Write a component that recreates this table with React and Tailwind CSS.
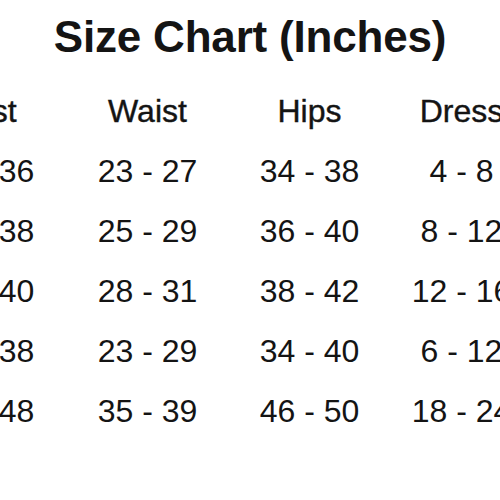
import React from "react";

const headers = ["Bust", "Waist", "Hips", "Dress"];

const rows = [
  ["32 - 36", "23 - 27", "34 - 38", "4 - 8"],
  ["34 - 38", "25 - 29", "36 - 40", "8 - 12"],
  ["36 - 40", "28 - 31", "38 - 42", "12 - 16"],
  ["32 - 38", "23 - 29", "34 - 40", "6 - 12"],
  ["44 - 48", "35 - 39", "46 - 50", "18 - 24"],
];

function App() {
  return (
    <div
      className="w-[500px] h-[500px] overflow-hidden bg-white text-[#141414]"
      style={{ fontFamily: '"Liberation Sans", Arial, sans-serif' }}
    >
      <h1 className="pt-[15px] text-center text-[44px] leading-none font-bold tracking-[-0.2px]">
        Size Chart (Inches)
      </h1>

      {/* table is wider than the window, first and last columns are cut */}
      <div className="mt-[22px] ml-[-97px] w-[630px] grid grid-cols-[163px_163px_161px_143px] text-[32px] leading-[60px] text-center">
        {headers.map((h) => (
          <div key={h} className="whitespace-nowrap [-webkit-text-stroke:0.4px_#141414]">
            {h}
          </div>
        ))}
        {rows.map((row, i) =>
          row.map((cell, j) => (
            <div key={i + "-" + j} className="whitespace-nowrap">
              {cell}
            </div>
          ))
        )}
      </div>
    </div>
  );
}

export default App;
